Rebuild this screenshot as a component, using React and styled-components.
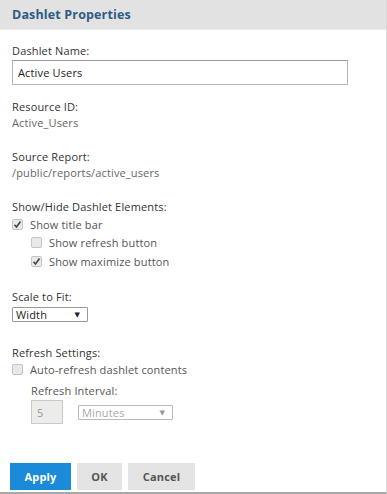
import React from 'react';
import styled, { createGlobalStyle } from 'styled-components';

const Global = createGlobalStyle`
  html, body { margin: 0; padding: 0; background: #fff; }
  body { font-family: "Open Sans", "DejaVu Sans", sans-serif; font-size: 11px; color: #333; letter-spacing: 0.15px; }
`;

const Panel = styled.div`
  width: 386px;
  height: 492px;
  border-right: 1px solid #d9d9d9;
  border-bottom: 2px solid #a8a8a8;
  display: flex;
  flex-direction: column;
`;

const Header = styled.div`
  height: 29px;
  background: #e2e2e2;
  border-bottom: 1px solid #ececec;
  display: flex;
  align-items: center;
  padding-left: 12px;
  font-weight: bold;
  font-size: 12.5px;
  color: #2f5b86;
`;

const Body = styled.div`
  flex: 1;
  padding: 13px 12px 0 12px;
  display: flex;
  flex-direction: column;
`;

const Section = styled.div`
  display: flex;
  flex-direction: column;
  margin-bottom: ${p => p.$gap || 0}px;
`;

const Label = styled.div`
  color: ${p => p.$muted ? '#555' : '#333'};
  line-height: 16px;
  margin-left: ${p => p.$indent || 0}px;
  margin-top: ${p => p.$top || 0}px;
`;

const Value = styled.div`
  color: #666;
  line-height: 16px;
`;

const TextInput = styled.div`
  width: 336px;
  height: 25px;
  margin-top: 1px;
  border: 1px solid #b5b5b5;
  border-top-color: #999;
  box-sizing: border-box;
  display: flex;
  align-items: center;
  padding-left: 5px;
  color: #222;
`;

const CheckRow = styled.div`
  display: flex;
  align-items: center;
  gap: 7px;
  height: 18.5px;
  padding-left: ${p => p.$indent || 0}px;
  color: #555;
`;

const Box = styled.span`
  width: 11px;
  height: 11px;
  border: 1px solid #c4c4c4;
  border-radius: 2px;
  background: #e9e9e9;
  box-sizing: border-box;
  display: inline-flex;
  align-items: center;
  justify-content: center;
`;

const Check = ({ checked }) => (
  <Box>
    {checked && (
      <svg width="9" height="9" viewBox="0 0 9 9">
        <path d="M1.5 4.8 L3.5 7 L7.5 1.5" fill="none" stroke="#444" strokeWidth="1.6" />
      </svg>
    )}
  </Box>
);

const Select = styled.div`
  width: ${p => p.$w}px;
  height: 15px;
  margin-top: ${p => p.$top || 0}px;
  box-sizing: border-box;
  border: 1px solid ${p => (p.$disabled ? '#bbb' : '#999')};
  border-radius: 1px;
  display: flex;
  align-items: center;
  justify-content: space-between;
  padding: 0 7px 0 3px;
  color: ${p => (p.$disabled ? '#aaa' : '#222')};
  background: #fff;
`;

const Arrow = styled.span`
  font-size: 7px;
  color: ${p => (p.$disabled ? '#999' : '#222')};
`;

const IntervalRow = styled.div`
  display: flex;
  align-items: center;
  gap: 15px;
  padding-left: 19px;
  margin-top: 1px;
`;

const NumBox = styled.div`
  width: 32px;
  height: 24px;
  box-sizing: border-box;
  border: 1px solid #c9c9c9;
  background: #ececea;
  color: #999;
  display: flex;
  align-items: center;
  padding-left: 5px;
`;

const Footer = styled.div`
  display: flex;
  gap: 6px;
  padding: 0 10px;
  margin-top: auto;
  margin-bottom: 2px;
`;

const Button = styled.div`
  height: 27px;
  width: ${p => p.$w}px;
  display: flex;
  align-items: center;
  justify-content: center;
  font-weight: bold;
  font-size: 11px;
  background: ${p => (p.$primary ? '#1a8ad9' : '#e4e4e4')};
  color: ${p => (p.$primary ? '#fff' : '#555')};
`;

export default function App() {
  return (
    <>
      <Global />
      <Panel>
        <Header>Dashlet Properties</Header>
        <Body>
          <Section $gap={14}>
            <Label>Dashlet Name:</Label>
            <TextInput>Active Users</TextInput>
          </Section>
          <Section $gap={18}>
            <Label>Resource ID:</Label>
            <Value>Active_Users</Value>
          </Section>
          <Section $gap={18}>
            <Label>Source Report:</Label>
            <Value>/public/reports/active_users</Value>
          </Section>
          <Section $gap={18}>
            <Label>Show/Hide Dashlet Elements:</Label>
            <CheckRow><Check checked />Show title bar</CheckRow>
            <CheckRow $indent={19}><Check />Show refresh button</CheckRow>
            <CheckRow $indent={19}><Check checked />Show maximize button</CheckRow>
          </Section>
          <Section $gap={23}>
            <Label>Scale to Fit:</Label>
            <Select $w={76} $top={2}>Width<Arrow>▼</Arrow></Select>
          </Section>
          <Section>
            <Label>Refresh Settings:</Label>
            <CheckRow><Check />Auto-refresh dashlet contents</CheckRow>
            <Label $indent={19} $muted $top={4}>Refresh Interval:</Label>
            <IntervalRow>
              <NumBox>5</NumBox>
              <Select $w={95} $disabled>Minutes<Arrow $disabled>▼</Arrow></Select>
            </IntervalRow>
          </Section>
        </Body>
        <Footer>
          <Button $primary $w={61}>Apply</Button>
          <Button $w={45}>OK</Button>
          <Button $w={67}>Cancel</Button>
        </Footer>
      </Panel>
    </>
  );
}
